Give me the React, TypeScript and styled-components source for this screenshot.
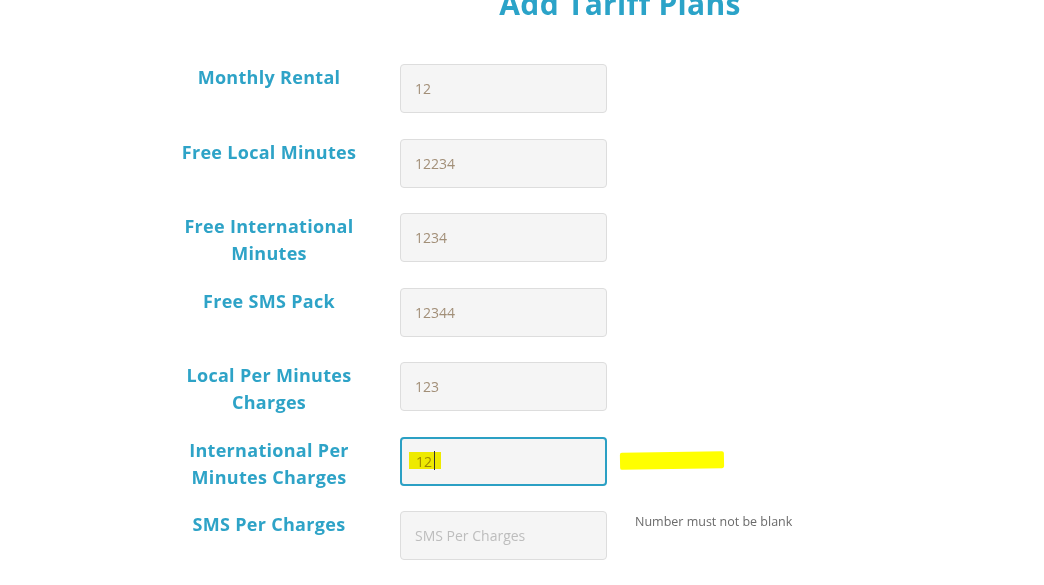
import React from "react";
import styled, { createGlobalStyle } from "styled-components";

const GlobalStyle = createGlobalStyle`
  html, body {
    margin: 0;
    padding: 0;
    background: #ffffff;
    overflow: hidden;
  }
`;

const Page = styled.div`
  width: 1044px;
  height: 585px;
  overflow: hidden;
  font-family: "Open Sans", "Liberation Sans", sans-serif;
`;

const Title = styled.h2`
  margin: -14px 0 0 0;
  padding-left: 196px;
  text-align: center;
  font-family: "Open Sans", "Liberation Sans", sans-serif;
  font-weight: 700;
  font-size: 30px;
  line-height: 36px;
  letter-spacing: 0.3px;
  color: #2ba3c8;
`;

const Form = styled.div`
  display: grid;
  grid-template-columns: 200px 207px auto;
  grid-auto-rows: 49px;
  column-gap: 31px;
  row-gap: 25.5px;
  margin: 42px 0 0 169px;
`;

const Label = styled.div`
  text-align: center;
  font-family: "Open Sans", "Liberation Sans", sans-serif;
  font-weight: 700;
  font-size: 18px;
  line-height: 27px;
  color: #2ea3c7;
  letter-spacing: 0.3px;
  white-space: nowrap;
`;

const Field = styled.div`
  position: relative;
  height: 49px;
`;

const Input = styled.input<{ $focused?: boolean }>`
  box-sizing: border-box;
  width: 100%;
  height: 49px;
  padding: 0 14px;
  border: ${(p) => (p.$focused ? "2px solid #2ba0c4" : "1px solid #dddddd")};
  border-radius: 4px;
  background: #f5f5f5;
  font-family: "Open Sans", "Liberation Sans", sans-serif;
  font-size: 14px;
  font-weight: 400;
  color: #a28f78;
  outline: none;

  &::placeholder {
    color: #bdbdbd;
  }
`;

const Marker = styled.span`
  position: absolute;
  left: 9px;
  top: 15px;
  width: 32px;
  height: 17px;
  background: #f8f400;
  mix-blend-mode: multiply;
  pointer-events: none;
`;

const Caret = styled.span`
  position: absolute;
  left: 34px;
  top: 14px;
  width: 1px;
  height: 19px;
  background: #333;
`;

const Note = styled.div`
  display: flex;
  align-items: center;
  height: 20px;
  margin-left: -3px;
  font-family: "Open Sans", "Liberation Sans", sans-serif;
  font-size: 12.5px;
  color: #6b6b6b;
`;

const Scribble = styled.span`
  display: inline-block;
  margin: 15px 0 0 -18px;
  width: 104px;
  height: 17px;
  background: #ffff00;
  transform: rotate(-1deg);
  border-radius: 2px;
`;

const rows = [
  { label: ["Monthly Rental"], value: "12" },
  { label: ["Free Local Minutes"], value: "12234" },
  { label: ["Free International", "Minutes"], value: "1234" },
  { label: ["Free SMS Pack"], value: "12344" },
  { label: ["Local Per Minutes", "Charges"], value: "123" },
];

export default function App() {
  return (
    <Page>
      <GlobalStyle />
      <Title>Add Tariff Plans</Title>
      <Form>
        {rows.map((r) => (
          <React.Fragment key={r.label.join(" ")}>
            <Label>
              {r.label.map((line, i) => (
                <div key={i}>{line}</div>
              ))}
            </Label>
            <Field>
              <Input defaultValue={r.value} readOnly />
            </Field>
            <div />
          </React.Fragment>
        ))}

        <Label>
          <div>International Per</div>
          <div>Minutes Charges</div>
        </Label>
        <Field>
          <Input $focused defaultValue="12" readOnly />
          <Marker />
          <Caret />
        </Field>
        <div>
          <Scribble />
        </div>

        <Label>SMS Per Charges</Label>
        <Field>
          <Input placeholder="SMS Per Charges" />
        </Field>
        <Note>Number must not be blank</Note>
      </Form>
    </Page>
  );
}
